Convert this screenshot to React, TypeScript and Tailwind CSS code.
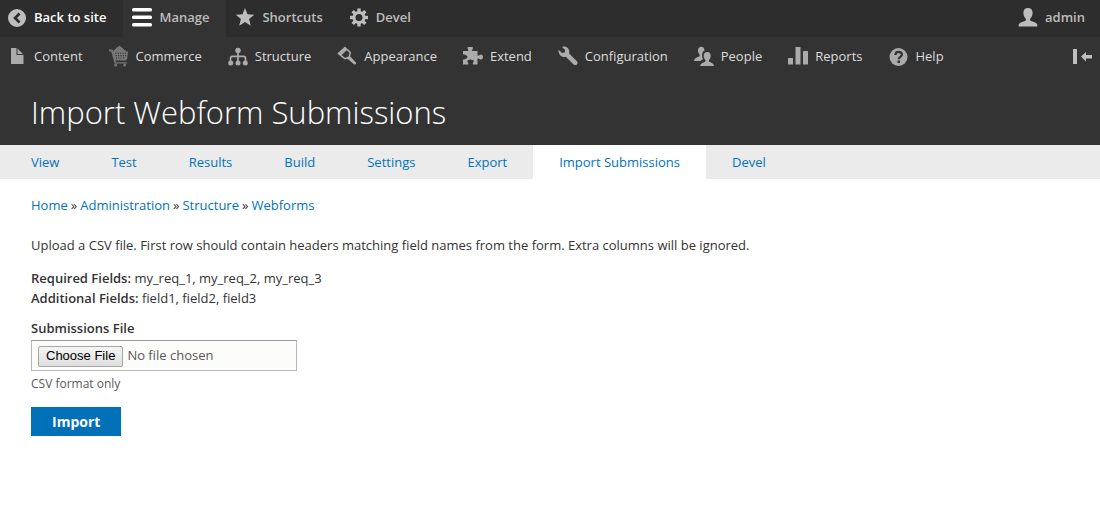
import type { ReactNode } from "react"

interface Item {
  label: string
  icon: ReactNode
}

const Icon = ({ children, className = "fill-[#bebebe]" }: { children: ReactNode; className?: string }) => (
  <svg viewBox="0 0 20 20" className={`h-5 w-5 shrink-0 overflow-visible ${className}`} aria-hidden="true">
    {children}
  </svg>
)

const BackIcon = () => (
  <Icon>
    <path
      fillRule="evenodd"
      d="M10 2a9 9 0 1 0 0 18a9 9 0 0 0 0-18zM11.600 5.600l1.900 1.900L10 11l3.500 3.500l-1.900 1.900L6.200 11z"
    />
  </Icon>
)

const MenuIcon = () => (
  <Icon className="fill-white">
    <rect y="1" width="20" height="3.500" rx="1.500" />
    <rect y="8.500" width="20" height="3.500" rx="1.500" />
    <rect y="16" width="20" height="3.500" rx="1.500" />
  </Icon>
)

const StarIcon = () => (
  <Icon>
    <path d="M10 1l2.500 6.300l6.700.5l-5.100 4.300l1.700 6.700L10 15.100l-5.800 3.700l1.700-6.700L.8 7.800l6.700-.5z" />
  </Icon>
)

const GearIcon = () => (
  <Icon>
    {[0, 45, 90, 135, 180, 225, 270, 315].map((angle) => (
      <rect key={angle} x="8.300" y="1.500" width="3.400" height="4.500" transform={`rotate(${angle} 10 10.5)`} />
    ))}
    <path
      fillRule="evenodd"
      d="M10 4a6.500 6.500 0 1 0 0 13a6.500 6.500 0 0 0 0-13zm0 3a3.500 3.500 0 1 1 0 7a3.500 3.500 0 0 1 0-7z"
    />
  </Icon>
)

const UserIcon = () => (
  <Icon>
    <path d="M10 1c-3 0-4.600 2-4.600 4.800c0 2.700 1 4.700 2.400 5.900c.4.900.2 1.800-.8 2.200C3.700 15 1.200 15.500.6 18c-.1.600 0 1.500.4 1.500h18c.4 0 .5-.9.400-1.500c-.6-2.500-3.100-3-6.400-4.100c-1-.4-1.200-1.300-.8-2.200c1.400-1.200 2.400-3.200 2.400-5.900C14.600 3 13 1 10 1z" />
  </Icon>
)

const FileIcon = () => (
  <Icon className="fill-[#ababab]">
    <path d="M4 2h5.500v7H16.500v9H4zM10.500 2.500L16 8h-5.500z" />
  </Icon>
)

const CartIcon = () => (
  <Icon className="fill-[#777]">
    <path d="M4 5.500c.6-1.800 1.800-1.500 2.600-2.700C7.700 1.200 9.400 1.400 10.500-.5c1.100 1.900 2.700 1.700 3.800 3.300c.8 1.200 2.200.9 2.800 2.700h2l-.8 6c-.2 2-.8 3-2.500 3H6.400l.5 1.700H18V17.500H5.600L2.300 5.400H0V3.600h3.600z" />
    <circle cx="6.700" cy="19" r="1.500" />
    <circle cx="15.700" cy="19" r="1.500" />
    <path
      d="M6.300 7.200h11M6.600 9.600h10.600M6.900 12h9.600"
      className="fill-none stroke-[#333]"
      strokeWidth="1.100"
      strokeDasharray="1.100 1.300"
    />
  </Icon>
)

const StructureIcon = () => (
  <Icon className="fill-[#ababab]">
    <circle cx="10" cy="4.500" r="2.700" />
    <path
      d="M10 4v11M2.500 16v-3.500c0-1.700.6-2.200 2-2.200h11c1.400 0 2 .5 2 2.200V16"
      className="fill-none stroke-[#ababab]"
      strokeWidth="1.700"
    />
    <circle cx="2.700" cy="17" r="2.500" />
    <circle cx="10" cy="17" r="2.500" />
    <circle cx="17.300" cy="17" r="2.500" />
  </Icon>
)

const BrushIcon = () => (
  <Icon className="fill-[#ababab]">
    <path d="M8 .5L10.800 3.200L3.400 10.200L.3 7.600z" />
    <path
      d="M10.200 3.600L13.300 6.500L12.200 11.200L7.800 12.600L4 9.600"
      className="fill-none stroke-[#ababab]"
      strokeWidth="1.500"
    />
    <path d="M11.200 10.500L13.600 10.800L19 16.800c.6.800-.9 2.300-1.700 1.600L11.300 13.500L9.500 12.800z" />
  </Icon>
)

const PuzzleIcon = () => (
  <Icon className="fill-[#ababab]">
    <path d="M0 5h5.200c.5-1.600-.7-1.600-.7-2.900C4.500.8 5.600 1 7.200 1s2.800-.2 2.800 1.100c0 1.300-1.200 1.300-.8 2.900H14.500v4.500c1.500.6 2-.9 3.300-.9c1.400 0 2.200 1 2.200 2.400s-.8 2.500-2.200 2.500c-1.300 0-1.800-1.500-3.300-.9V18.500h-4.700c-.5-1.700 1-1.800 1-3.200c0-1.200-1.300-1.900-3.200-1.900s-3.200.7-3.200 1.900c0 1.400 1.400 1.500.9 3.200H0v-5c1.800.6 1.700-.8 2.800-.8c1 0 1.600-.6 1.600-1.700s-.6-1.800-1.600-1.800c-1.100 0-1-1.300-2.800-.7z" />
  </Icon>
)

const WrenchIcon = () => (
  <Icon className="fill-[#ababab]">
    <path d="M.7 3.800L4 7l2.600-.6L7.200 4L4 .9c2.300-.8 4.500-.2 6 1.400c1.300 1.500 1.600 3.300 1.100 5.200l7.600 7.400c1.200 1.200 1.100 2.600.2 3.500s-2.500 1-3.600-.2l-7.500-7.500c-1.800.5-3.800.1-5.300-1.300C.9 7.900.2 6 .7 3.800z" />
  </Icon>
)

const PeopleIcon = () => (
  <Icon className="fill-[#ababab]">
    <path d="M7.300.8c-2 0-3.300 1.300-3.300 3.500c0 2 .6 3.200 1.500 4.100c.5 1.600-.2 2-1.700 2.600C1.700 11.900.2 12.600 0 15h6.300c.9-.9 1.700-1.300 2.700-1.700C8 11.300 7.800 9 8.500 6.800c.4-1.200 1.200-1.700 2-2.200C10.300 2.300 9.300.8 7.300.8z" />
    <path d="M13.300 6c-2.300 0-3.600 1.500-3.600 3.700c0 2 .7 3.400 1.700 4.300c.5 1.600-.2 1.800-1.900 2.400c-1.700.7-3 1.100-3.300 3.600h13.800c-.3-2.500-1.600-2.900-3.100-3.600c-1.700-.6-2.300-.8-1.900-2.400c1-.9 1.700-2.300 1.700-4.300c0-2.200-1.200-3.700-3.400-3.700z" />
  </Icon>
)

const ChartIcon = () => (
  <Icon className="fill-[#ababab]">
    <rect y="12" width="5" height="6.500" rx=".5" />
    <rect x="7.500" y="1" width="5" height="17.500" rx=".5" />
    <rect x="15" y="5" width="5" height="13.500" rx=".5" />
  </Icon>
)

const HelpIcon = () => (
  <Icon className="fill-[#ababab]">
    <circle cx="10.500" cy="11" r="9" />
    <path
      d="M7.400 9c0-2.200 1.300-3.200 3.200-3.200s3.300 1 3.300 2.800c0 2.200-3.200 2.300-3.200 4.700"
      className="fill-none stroke-[#333]"
      strokeWidth="2.200"
    />
    <rect x="9.500" y="14.500" width="2.500" height="2.500" className="fill-[#333]" />
  </Icon>
)

const adminMenu: Item[] = [
  { label: "Content", icon: <FileIcon /> },
  { label: "Commerce", icon: <CartIcon /> },
  { label: "Structure", icon: <StructureIcon /> },
  { label: "Appearance", icon: <BrushIcon /> },
  { label: "Extend", icon: <PuzzleIcon /> },
  { label: "Configuration", icon: <WrenchIcon /> },
  { label: "People", icon: <PeopleIcon /> },
  { label: "Reports", icon: <ChartIcon /> },
  { label: "Help", icon: <HelpIcon /> },
]

const tabs = ["View", "Test", "Results", "Build", "Settings", "Export", "Import Submissions", "Devel"]
const breadcrumb = ["Home", "Administration", "Structure", "Webforms"]

const barItem = "flex items-center gap-[7px] pl-[9px] pr-[17px] first:pl-[7px]"

const Toolbar = () => (
  <div className="bg-[#333] text-[#ddd]">
    <nav className="flex h-[37px] bg-[#2d2d2d] font-semibold text-[#bebebe]">
      <a href="#" className={`${barItem} pb-[3px] text-white`}>
        <BackIcon />
        Back to site
      </a>
      <a href="#" className={`${barItem} bg-[#333] pb-[3px]`}>
        <MenuIcon />
        Manage
      </a>
      <a href="#" className={`${barItem} pb-[3px]`}>
        <StarIcon />
        Shortcuts
      </a>
      <a href="#" className={`${barItem} pb-[3px]`}>
        <GearIcon />
        Devel
      </a>
      <a href="#" className="ml-auto flex items-center gap-[7px] pr-[15px] pb-[3px]">
        <UserIcon />
        admin
      </a>
    </nav>
    <nav className="flex h-[38px]">
      {adminMenu.map((item) => (
        <a key={item.label} href="#" className={barItem}>
          {item.icon}
          {item.label}
        </a>
      ))}
      <button type="button" aria-label="Vertical orientation" className="ml-auto flex items-center pr-2">
        <Icon>
          <path d="M1 3h4v15H1zM9 10.500L14 6V9h6v3.500h-6V15.500z" />
        </Icon>
      </button>
    </nav>
  </div>
)

export default function App() {
  return (
    <div className="font-['Open_Sans',sans-serif] text-[13px] leading-5 text-[#333]">
      <Toolbar />
      <header className="bg-[#333] px-[31px] pt-4 pb-3">
        <h1 className="text-[31px] leading-[42px] font-light text-white">Import Webform Submissions</h1>
      </header>
      <nav className="flex h-[34px] bg-[#ebebeb] pl-[5px] text-[#0074bd]">
        {tabs.map((tab) => (
          <a
            key={tab}
            href="#"
            className={`flex items-center px-[26px] ${tab === "Import Submissions" ? "bg-white" : ""}`}
          >
            {tab}
          </a>
        ))}
      </nav>

      <main className="px-[31px] pt-4">
        <nav className="flex gap-[3px]">
          {breadcrumb.map((crumb, i) => (
            <span key={crumb} className="flex gap-[3px]">
              {i > 0 && <span>»</span>}
              <a href="#" className="text-[#0074bd]">
                {crumb}
              </a>
            </span>
          ))}
        </nav>

        <p className="mt-5">
          Upload a CSV file. First row should contain headers matching field names from the form. Extra columns will be
          ignored.
        </p>
        <p className="mt-[13px]">
          <b className="font-semibold">Required Fields:</b> my_req_1, my_req_2, my_req_3
          <br />
          <b className="font-semibold">Additional Fields:</b> field1, field2, field3
        </p>

        <form className="mt-[10px] flex flex-col items-start" onSubmit={(e) => e.preventDefault()}>
          <label htmlFor="submissions-file" className="font-semibold">
            Submissions File
          </label>
          <input
            id="submissions-file"
            type="file"
            accept=".csv"
            className="mt-0.5 h-[31px] w-[266px] border border-[#b8b8b8] border-t-[#999] bg-[#fcfcfa] px-1.5 py-1 text-[#595959] file:mr-1 file:h-[21px] file:rounded-xs file:border file:border-solid file:border-[#a6a6a6] file:bg-linear-to-b file:from-[#f6f6f6] file:to-[#dedede] file:px-[7px] file:font-['Liberation_Sans',Arial,sans-serif] file:text-[13px] file:leading-4 file:text-black"
          />
          <p className="mt-[3px] text-xs leading-5 text-[#595959]">CSV format only</p>
          <button type="submit" className="mt-[13px] h-[29px] bg-[#0071b8] px-[21px] text-sm font-bold text-white">
            Import
          </button>
        </form>
      </main>
    </div>
  )
}
